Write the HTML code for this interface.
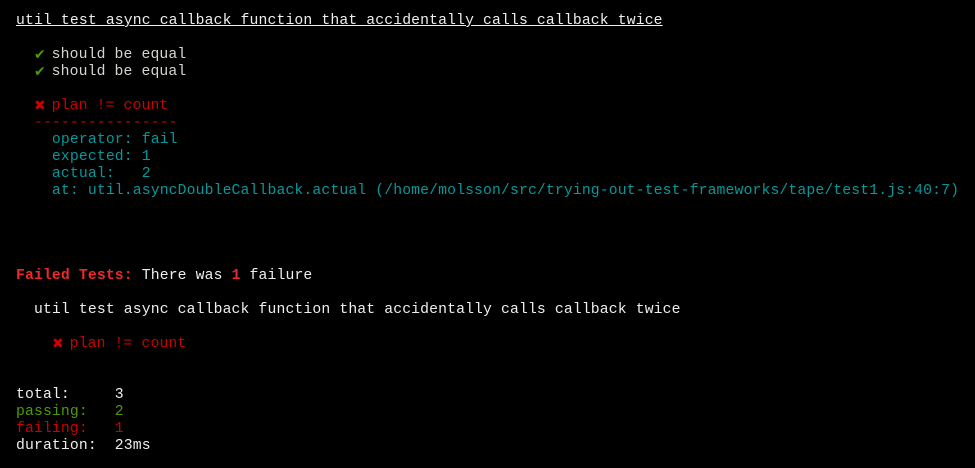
<!DOCTYPE html>
<html><head><meta charset="utf-8"><style>
html,body{margin:0;background:#000;width:975px;height:468px;overflow:hidden}
pre{margin:0;position:absolute;left:16px;top:13px;font-family:"Liberation Mono","DejaVu Sans Mono",monospace;font-size:14.75px;line-height:17px;letter-spacing:0.13px;color:#d3d7cf}
.w{color:#eeeeec}.u{text-decoration:underline}
.g{color:#4e9a06}.r{color:#cc0000}.c{color:#06989a}.br{color:#ef2929;font-weight:bold}
.i{display:inline-block;width:17.7px;height:17px;line-height:17px;vertical-align:top;font-family:"DejaVu Sans",sans-serif;font-size:14px;font-weight:bold;overflow:hidden}
</style></head><body><pre><span class="w u">util test async callback function that accidentally calls callback twice</span>

  <span class="g i">✔</span>should be equal
  <span class="g i">✔</span>should be equal

  <span class="r"><span class="i">✖</span>plan != count</span>
<span class="r">  ----------------</span>
<span class="c">    operator: fail
    expected: 1
    actual:   2
    at: util.asyncDoubleCallback.actual (/home/molsson/src/trying-out-test-frameworks/tape/test1.js:40:7)</span>




<span class="br">Failed Tests:</span> <span class="w">There was <span class="br">1</span> failure</span>

<span class="w">  util test async callback function that accidentally calls callback twice</span>

    <span class="r"><span class="i">✖</span>plan != count</span>


<span class="w">total:     3</span>
<span class="g">passing:   2</span>
<span class="r">failing:   1</span>
<span class="w">duration:  23ms</span></pre></body></html>
